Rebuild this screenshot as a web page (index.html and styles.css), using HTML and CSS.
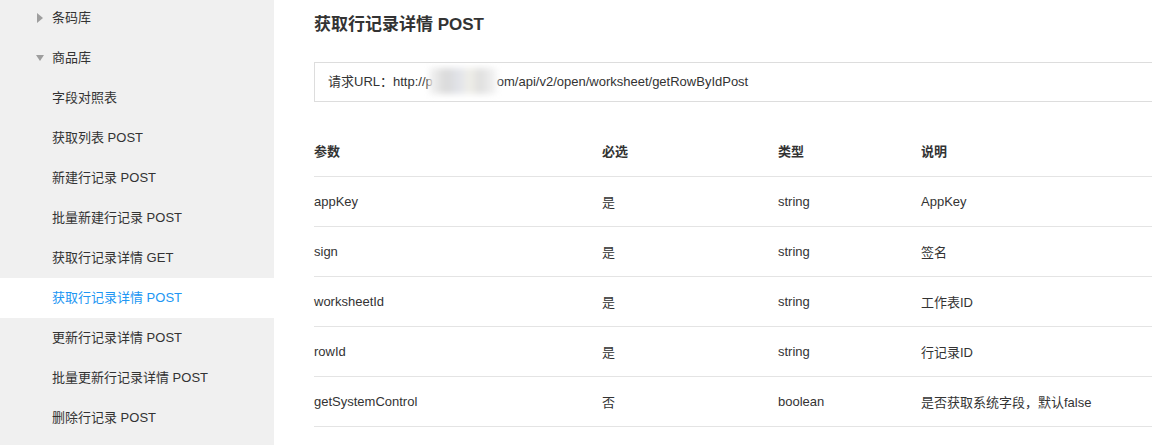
FILE: index.html
```html
<!DOCTYPE html>
<html lang="zh-CN">
<head>
    <meta charset="UTF-8">
    <title>获取行记录详情 POST</title>
    <link rel="stylesheet" href="styles.css">
</head>
<body>
    <div class="layout">
        <aside class="sidebar">
            <ul class="menu">
                <li class="menu-group"><span class="arrow arrow-right"></span>条码库</li>
                <li class="menu-group"><span class="arrow arrow-down"></span>商品库</li>
                <li class="menu-item">字段对照表</li>
                <li class="menu-item">获取列表 POST</li>
                <li class="menu-item">新建行记录 POST</li>
                <li class="menu-item">批量新建行记录 POST</li>
                <li class="menu-item">获取行记录详情 GET</li>
                <li class="menu-item active">获取行记录详情 POST</li>
                <li class="menu-item">更新行记录详情 POST</li>
                <li class="menu-item">批量更新行记录详情 POST</li>
                <li class="menu-item">删除行记录 POST</li>
            </ul>
        </aside>

        <main class="content">
            <div class="doc">
                <h1 class="doc-title">获取行记录详情 POST</h1>

                <div class="url-box">请求URL：http://p<span class="mask"></span>om/api/v2/open/worksheet/getRowByIdPost</div>

                <table class="params">
                    <thead>
                        <tr>
                            <th class="col-name">参数</th>
                            <th class="col-req">必选</th>
                            <th class="col-type">类型</th>
                            <th>说明</th>
                        </tr>
                    </thead>
                    <tbody>
                        <tr>
                            <td>appKey</td>
                            <td>是</td>
                            <td>string</td>
                            <td>AppKey</td>
                        </tr>
                        <tr>
                            <td>sign</td>
                            <td>是</td>
                            <td>string</td>
                            <td>签名</td>
                        </tr>
                        <tr>
                            <td>worksheetId</td>
                            <td>是</td>
                            <td>string</td>
                            <td>工作表ID</td>
                        </tr>
                        <tr>
                            <td>rowId</td>
                            <td>是</td>
                            <td>string</td>
                            <td>行记录ID</td>
                        </tr>
                        <tr>
                            <td>getSystemControl</td>
                            <td>否</td>
                            <td>boolean</td>
                            <td>是否获取系统字段，默认false</td>
                        </tr>
                    </tbody>
                </table>
            </div>
        </main>
    </div>
</body>
</html>
```

FILE: styles.css
```css
* {
    margin: 0;
    padding: 0;
    box-sizing: border-box;
}

body {
    font-family: 'Liberation Sans', 'Noto Sans CJK SC', sans-serif;
    font-size: 13px;
    color: #333;
    background: #fff;
    height: 100vh;
    overflow: hidden;
}

.layout {
    display: flex;
    height: 100vh;
}

.sidebar {
    width: 274px;
    flex-shrink: 0;
    background-color: #f0f0f0;
    overflow: hidden;
}

.menu {
    list-style: none;
    margin-top: -2px;
}

.menu li {
    height: 40px;
    line-height: 40px;
    padding-left: 52px;
    position: relative;
    white-space: nowrap;
}

.menu-item.active {
    background-color: #fff;
    color: #2196f3;
}

.arrow {
    position: absolute;
    width: 0;
    height: 0;
}

.arrow-right {
    left: 37px;
    top: 15px;
    border-top: 5px solid transparent;
    border-bottom: 5px solid transparent;
    border-left: 6px solid #9e9e9e;
}

.arrow-down {
    left: 36px;
    top: 17px;
    border-left: 4.5px solid transparent;
    border-right: 4.5px solid transparent;
    border-top: 6px solid #9e9e9e;
}

.content {
    flex: 1;
    overflow: hidden;
    padding: 14px 0 0 40px;
}

.doc {
    width: 920px;
}

.doc-title {
    font-size: 17px;
    font-weight: bold;
    line-height: 22px;
    color: #333;
}

.url-box {
    margin-top: 26px;
    height: 40px;
    line-height: 38px;
    border: 1px solid #ddd;
    padding-left: 13px;
    white-space: nowrap;
}

.mask {
    display: inline-block;
    width: 68px;
    height: 26px;
    vertical-align: middle;
    margin: -4px 0 0 -4px;
    background: linear-gradient(90deg, #f4f4f4 0%, #d9d9d9 25%, #e2e4ea 45%, #f0efe8 60%, #dedede 75%, #f6f6f6 100%);
    filter: blur(3px);
}

.params {
    margin-top: 24px;
    width: 100%;
    border-collapse: collapse;
}

.params th,
.params td {
    height: 50px;
    text-align: left;
    vertical-align: middle;
    border-bottom: 1px solid #e4e4e4;
    padding: 0;
}

.params th {
    font-weight: bold;
}

.col-name {
    width: 288px;
}

.col-req {
    width: 176px;
}

.col-type {
    width: 143px;
}
```
